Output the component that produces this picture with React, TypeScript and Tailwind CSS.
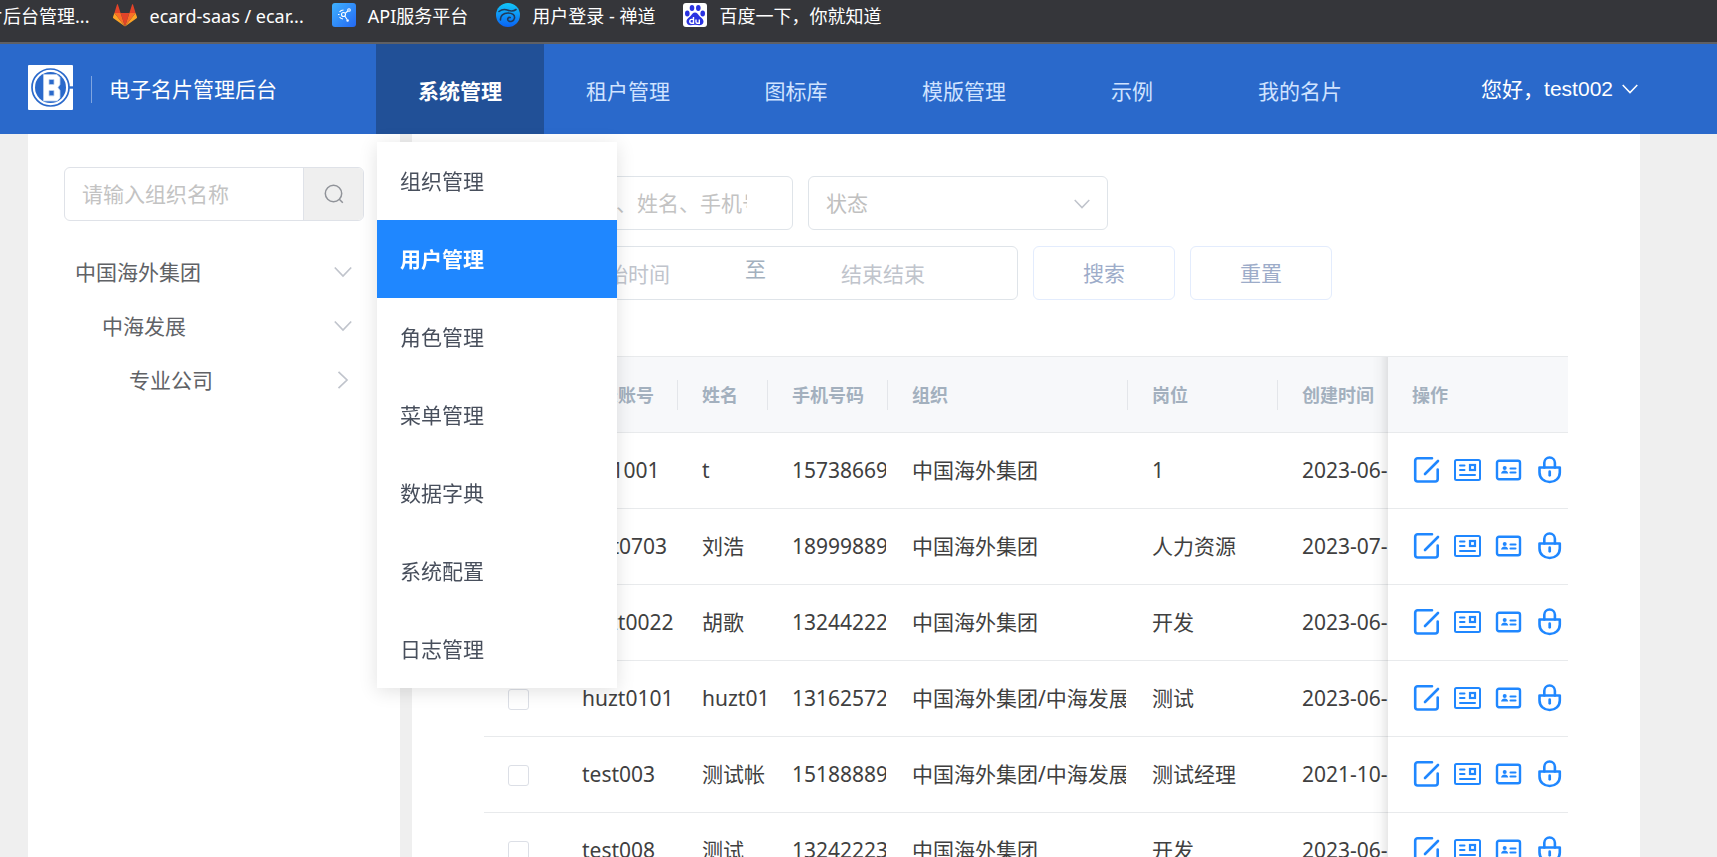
import type { ReactNode } from "react";

const bookmarks = [
  { label: "ecard-saas / ecar...", icon: <GitlabIcon /> },
  { label: "API服务平台", icon: <ApiIcon /> },
  { label: "用户登录 - 禅道", icon: <ZentaoIcon /> },
  { label: "百度一下，你就知道", icon: <BaiduIcon /> },
];

const navItems = ["系统管理", "租户管理", "图标库", "模版管理", "示例", "我的名片"];

const menuItems = ["组织管理", "用户管理", "角色管理", "菜单管理", "数据字典", "系统配置", "日志管理"];

const tree = [
  { label: "中国海外集团", indent: "pl-[11px]", open: true },
  { label: "中海发展", indent: "pl-[38px]", open: true },
  { label: "专业公司", indent: "pl-[65px]", open: false },
];

const columns = ["登录账号", "姓名", "手机号码", "组织", "岗位", "创建时间"];

const users = [
  { account: "tes1001", name: "t", phone: "15738669120", org: "中国海外集团", post: "1", created: "2023-06-12 10:20" },
  { account: "test0703", name: "刘浩", phone: "18999889120", org: "中国海外集团", post: "人力资源", created: "2023-07-03 10:20" },
  { account: "huzt0022", name: "胡歌", phone: "13244222120", org: "中国海外集团", post: "开发", created: "2023-06-12 10:20" },
  { account: "huzt0101", name: "huzt0101", phone: "13162572120", org: "中国海外集团/中海发展", post: "测试", created: "2023-06-12 10:20" },
  { account: "test003", name: "测试帐号", phone: "15188889120", org: "中国海外集团/中海发展", post: "测试经理", created: "2021-10-12 10:20" },
  { account: "test008", name: "测试", phone: "13242223120", org: "中国海外集团", post: "开发", created: "2023-06-12 10:20" },
];

function GitlabIcon() {
  return (
    <svg viewBox="0 0 24 24" className="size-6" aria-hidden>
      <path d="M12 23.5 16.4 10H7.6z" fill="#e24329" />
      <path d="M12 23.5 7.6 10H1.4zM12 23.5 16.4 10h6.2z" fill="#fc6d26" />
      <path d="M1.4 10 0 14c-.1.5 0 .9.4 1.2L12 23.5zM22.6 10 24 14c.1.5 0 .9-.4 1.2L12 23.5z" fill="#fca326" />
      <path d="M1.4 10h6.2L4.9 1.6c-.1-.5-.7-.5-.9 0zM22.6 10h-6.2l2.7-8.4c.1-.5.7-.5.9 0z" fill="#e24329" />
    </svg>
  );
}

function ApiIcon() {
  return (
    <svg viewBox="0 0 24 24" className="size-6" aria-hidden>
      <defs>
        <linearGradient id="api" x1="0" y1="0" x2="1" y2="1">
          <stop offset="0" stopColor="#3fb2ff" />
          <stop offset="1" stopColor="#2468f2" />
        </linearGradient>
      </defs>
      <rect width="24" height="24" rx="3" fill="url(#api)" />
      <g fill="none" stroke="#fff" strokeWidth="1.1">
        <circle cx="11.5" cy="11.5" r="2" />
        <path d="m13.2 10.4 2.6-2.4M6 11.5h1.5M7.5 9a5 5 0 0 1 4-2M7.5 14a5 5 0 0 0 3.5 2M13 13.2l2 3.3" />
        <circle cx="17" cy="7" r="1.3" />
        <circle cx="15.6" cy="17.6" r=".7" />
      </g>
    </svg>
  );
}

function ZentaoIcon() {
  return (
    <svg viewBox="0 0 24 24" className="size-6" aria-hidden>
      <defs>
        <linearGradient id="zentao" x1="0" y1="0" x2="0" y2="1">
          <stop offset="0" stopColor="#12c8f8" />
          <stop offset="1" stopColor="#0a62f5" />
        </linearGradient>
      </defs>
      <circle cx="12" cy="12" r="12" fill="url(#zentao)" />
      <g fill="none" stroke="#203a5c" strokeLinecap="round">
        <path d="M3 8.5c3-2.500 6-2.500 9-1.300s6 .8 8-.7" strokeWidth="1.6" />
        <path d="M4.5 17c-.5-4.500 3-7 7.500-7s7 2.200 6.500 5.200-4.500 4.300-6.300 2.300c-1.200-1.600 0-3.500 2-3" strokeWidth="1.6" />
      </g>
    </svg>
  );
}

function BaiduIcon() {
  return (
    <svg viewBox="0 0 24 24" className="size-6" aria-hidden>
      <rect width="24" height="24" rx="3" fill="#fff" />
      <g fill="#2932e1">
        <ellipse cx="4.3" cy="10.5" rx="2.3" ry="2.9" />
        <ellipse cx="9" cy="5" rx="2.3" ry="3" />
        <ellipse cx="15.3" cy="5" rx="2.3" ry="3" />
        <ellipse cx="19.7" cy="10.5" rx="2.3" ry="2.9" />
        <path d="M12 9.5c2 0 3 1.5 4 3s4.5 3 4.5 6c0 2.5-2 3.8-4 3.8-1.6 0-3-.5-4.5-.5s-3 .5-4.5.5c-2.2 0-4-1.5-4-3.8 0-3 3.5-4.500 4.500-6s2-3 4-3z" />
      </g>
      <path d="M10.5 14v6.200H8.700a1.900 1.900 0 0 1 0-3.800h1.800M13 16.400v2.500c0 1 .5 1.300 1.300 1.300h2v-3.800" fill="none" stroke="#fff" strokeWidth="1.4" />
    </svg>
  );
}

function Logo() {
  return (
    <svg viewBox="0 0 45 45" className="mb-1 size-[45px]" aria-label="电子名片">
      <rect width="45" height="45" rx="1" fill="#fff" />
      <circle cx="22.5" cy="22.5" r="18.5" fill="none" stroke="#2a69cb" strokeWidth="1.7" />
      <path d="M41 22.5h4" stroke="#2a69cb" strokeWidth="2.4" />
      <circle cx="22.5" cy="22.5" r="15.5" fill="#2a69cb" />
      <path
        fillRule="evenodd"
        d="M15.5 9.5H29l3 3v7l-2 3 2 3V33l-3 3H15.5zM21 14.5v5h5v-5zM21 25.500v5.300h5v-5.300z"
        fill="#fff"
        stroke="#b9cfee"
        strokeWidth=".8"
      />
    </svg>
  );
}

function Chevron({ className, right }: { className?: string; right?: boolean }) {
  return (
    <svg viewBox="0 0 18 18" className={className} fill="none" stroke="currentColor" strokeWidth="1.7" aria-hidden>
      <path d={right ? "M4.5.8 13 9l-8.5 8.2" : "M.8 4.5 9 13l8.2-8.5"} />
    </svg>
  );
}

function ActionButton({ label, children }: { label: string; children: ReactNode }) {
  return (
    <button type="button" aria-label={label} className="size-7 shrink-0">
      <svg viewBox="0 0 28 28" className="size-7" fill="none" stroke="currentColor" strokeLinecap="round" strokeLinejoin="round">
        {children}
      </svg>
    </button>
  );
}

function RowActions() {
  return (
    <div className="flex items-center gap-[13px] pb-px pl-6 text-[#1f87ff]">
      <ActionButton label="编辑">
        <path d="M20 2.3H5.7a2.5 2.5 0 0 0-2.5 2.5V23a2.5 2.5 0 0 0 2.5 2.5h17.5a2.5 2.5 0 0 0 2.5-2.5v-9.500M13 18 26 5" strokeWidth="2.6" />
      </ActionButton>
      <ActionButton label="详情">
        <rect x="2" y="4" width="25" height="20" rx="1.5" strokeWidth="2" />
        <path d="M7 9.5h4.5M7 14h4.5M7 19h15" strokeWidth="2" />
        <rect x="17" y="9" width="5" height="5" strokeWidth="2.2" strokeLinejoin="miter" />
      </ActionButton>
      <ActionButton label="名片">
        <rect x="3" y="4.8" width="23" height="18.4" rx="2" strokeWidth="2.4" />
        <circle cx="10.7" cy="12" r="2" fill="currentColor" stroke="none" />
        <path d="M7 17.5c.3-2 2-3 3.700-3s3.300 1 3.500 3z" fill="currentColor" stroke="none" />
        <path d="M16.5 12.5h5M16.500 16.500h5" strokeWidth="2.1" />
      </ActionButton>
      <ActionButton label="锁定">
        <path d="M9.3 11.5V6.8a5.3 5.3 0 0 1 10.6 0v4.7" strokeWidth="2.6" />
        <path d="M4.5 11.5h20.3v5c0 5.6-4.5 9.5-10.1 9.5S4.500 22.100 4.500 16.500z" strokeWidth="2.6" />
        <path d="M14.7 15.7v3.6" strokeWidth="2.7" />
      </ActionButton>
    </div>
  );
}

function BookmarkBar() {
  return (
    <div className="flex h-11 shrink-0 items-start overflow-hidden whitespace-nowrap border-b-2 border-[#5f6064] bg-[#35363a] text-lg leading-8 text-white">
      <a href="#" className="-ml-[15px] mr-6">
        片后台管理...
      </a>
      <div className="flex gap-7">
        {bookmarks.map((bookmark) => (
          <a key={bookmark.label} href="#" className="flex items-start gap-3">
            <span className="pt-[3px]">{bookmark.icon}</span>
            {bookmark.label}
          </a>
        ))}
      </div>
    </div>
  );
}

function SystemMenu() {
  return (
    <ul className="absolute left-px top-[98px] z-20 w-60 bg-white text-[#484f5c] shadow-[0_3px_18px_rgba(0,0,0,0.12)]">
      {menuItems.map((item) => (
        <li key={item}>
          <a
            href="#"
            className={
              item === "用户管理"
                ? "flex h-[78px] items-center bg-[#1f87ff] px-[23px] font-bold text-white"
                : "flex h-[78px] items-center px-[23px]"
            }
          >
            {item}
          </a>
        </li>
      ))}
    </ul>
  );
}

function Header() {
  return (
    <header className="flex h-[90px] shrink-0 items-center bg-[#2a69cb] pl-7 text-white">
      <div className="flex w-[348px] shrink-0 items-center">
        <Logo />
        <span className="ml-[18px] h-[27px] w-px bg-white/40" />
        <h1 className="ml-[17px]">电子名片管理后台</h1>
      </div>
      <nav className="flex h-full">
        {navItems.map((item, index) => (
          <div key={item} className="relative w-42">
            <a
              href="#"
              className={
                index === 0
                  ? "flex h-full items-center justify-center bg-[#215097] pt-[3px] font-bold"
                  : "flex h-full items-center justify-center pt-[3px] text-[#d0e3ff]"
              }
            >
              {item}
            </a>
            {index === 0 && <SystemMenu />}
          </div>
        ))}
      </nav>
      <button type="button" className="ml-auto mr-[79px] flex items-center">
        您好，
        <span className="font-['Liberation_Sans',sans-serif]">test002</span>
        <Chevron className="ml-[9px] size-4" />
      </button>
    </header>
  );
}

function Sidebar() {
  return (
    <aside className="w-[372px] shrink-0 bg-white px-9 pt-[33px]">
      <form className="flex h-[54px] overflow-hidden rounded-md border border-[#dfe2e8]">
        <input
          type="text"
          aria-label="组织名称"
          placeholder="请输入组织名称"
          className="min-w-0 flex-1 px-[17px] outline-none placeholder:text-[#c3c3c3]"
        />
        <button type="button" aria-label="搜索组织" className="flex w-[60px] items-center justify-center border-l border-[#dfe2e8] bg-[#efefef] text-[#909399]">
          <svg viewBox="0 0 20 20" className="size-5" fill="none" stroke="currentColor" strokeWidth="1.5" aria-hidden>
            <circle cx="9.5" cy="9.5" r="8.2" />
            <path d="m15.3 15.3 3.5 3.5" />
          </svg>
        </button>
      </form>
      <ul className="mt-6 text-[#606266]">
        {tree.map((node) => (
          <li key={node.label} className={`flex h-[54px] items-center justify-between pr-3 ${node.indent}`}>
            {node.label}
            <Chevron className="size-[18px] text-[#c0c4cc]" right={!node.open} />
          </li>
        ))}
      </ul>
    </aside>
  );
}

function Filters() {
  return (
    <form className="flex flex-col gap-4 pl-[81px]">
      <div className="flex gap-[15px]">
        <input
          type="text"
          aria-label="关键字"
          placeholder="请输入账号、姓名、手机号码"
          className="h-[54px] w-[300px] rounded-md border border-[#dfe4e9] pl-[17px] pr-[45px] outline-none placeholder:text-[#c3c3c3]"
        />
        <div className="relative w-[300px]">
          <select aria-label="状态" className="h-[54px] w-full appearance-none rounded-md border border-[#dfe4e9] bg-white px-[17px] text-[#c0c0c0] outline-none">
            <option>状态</option>
          </select>
          <Chevron className="pointer-events-none absolute right-[18px] top-5 size-4 text-[#c0c4cc]" />
        </div>
      </div>
      <div className="flex gap-[15px]">
        <div className="flex h-[54px] w-[525px] items-center rounded-md border border-[#dfe4e9] px-[19px]">
          <input type="text" aria-label="开始时间" placeholder="开始时间" className="min-w-0 flex-1 pt-0.5 text-center outline-none placeholder:text-[#c0c4cc]" />
          <span className="w-[25px] pb-2 text-center text-[#a3b0be]">至</span>
          <input type="text" aria-label="结束时间" placeholder="结束结束" className="min-w-0 flex-1 pt-0.5 text-center outline-none placeholder:text-[#c0c4cc]" />
        </div>
        <button type="button" className="h-[54px] w-[142px] rounded-md border border-[#e3ecfd] text-[#9dacc9]">
          搜索
        </button>
        <button type="button" className="h-[54px] w-[142px] rounded-md border border-[#e3ecfd] text-[#9dacc9]">
          重置
        </button>
      </div>
    </form>
  );
}

function Cell({ children }: { children: ReactNode }) {
  return (
    <td className="h-[76px] border-b border-[#e8eaec] p-0 pb-0.5 pl-6 pr-[2px]">
      <div className="overflow-hidden whitespace-nowrap">{children}</div>
    </td>
  );
}

// the shadow is drawn beside the pinned column so it stays even across rows
const pinned =
  "sticky right-0 p-0 before:absolute before:-bottom-px before:-left-4 before:top-0 before:w-4 before:bg-linear-to-r before:from-transparent before:via-black/2 before:to-black/9";

function UserTable() {
  return (
    <div className="mx-[72px] mt-14 overflow-hidden">
      <table className="w-[1214px] min-w-full table-fixed border-separate border-spacing-0 text-left text-[#404040]">
        <colgroup>
          <col className="w-[74px]" />
          <col className="w-[120px]" />
          <col className="w-[90px]" />
          <col className="w-[120px]" />
          <col className="w-[240px]" />
          <col className="w-[150px]" />
          <col className="w-[240px]" />
          <col className="w-[180px]" />
        </colgroup>
        <thead>
          <tr className="text-lg leading-[30px] text-[#a3b0be]">
            <th className="h-[77px] border-y border-[#e8eaec] bg-[#f7f8fa] p-0 pl-6">
              <input type="checkbox" aria-label="全选" className="block size-[21px] appearance-none rounded-[3px] border border-[#dcdfe6] bg-white" />
            </th>
            {columns.map((column) => (
              <th key={column} className="border-y border-[#e8eaec] bg-[#f7f8fa] p-0 font-bold">
                <div className="border-r border-[#e4e6ea] pl-6">{column}</div>
              </th>
            ))}
            <th className={`${pinned} border-y border-[#e8eaec] bg-[#f7f8fa] font-bold`}>
              <div className="pl-6">操作</div>
            </th>
          </tr>
        </thead>
        <tbody>
          {users.map((user) => (
            <tr key={user.account}>
              <td className="border-b border-[#e8eaec] p-0 pl-6 pt-0.5">
                <input
                  type="checkbox"
                  aria-label={user.account}
                  className="block size-[21px] appearance-none rounded-[3px] border border-[#dcdfe6] bg-white"
                />
              </td>
              <Cell>{user.account}</Cell>
              <Cell>{user.name}</Cell>
              <Cell>{user.phone}</Cell>
              <Cell>{user.org}</Cell>
              <Cell>{user.post}</Cell>
              <Cell>{user.created}</Cell>
              <td className={`${pinned} border-b border-[#e8eaec] bg-white`}>
                <RowActions />
              </td>
            </tr>
          ))}
        </tbody>
      </table>
    </div>
  );
}

export default function App() {
  return (
    <div className="flex h-screen flex-col overflow-hidden bg-[#efefef] font-['Noto_Sans','Noto_Sans_CJK_SC',sans-serif] text-[21px] leading-[30px]">
      <BookmarkBar />
      <Header />
      <div className="mr-[77px] ml-7 flex min-h-0 flex-1 gap-3">
        <Sidebar />
        <main className="min-w-0 flex-1 overflow-hidden bg-white pt-[42px]">
          <Filters />
          <UserTable />
        </main>
      </div>
    </div>
  );
}
